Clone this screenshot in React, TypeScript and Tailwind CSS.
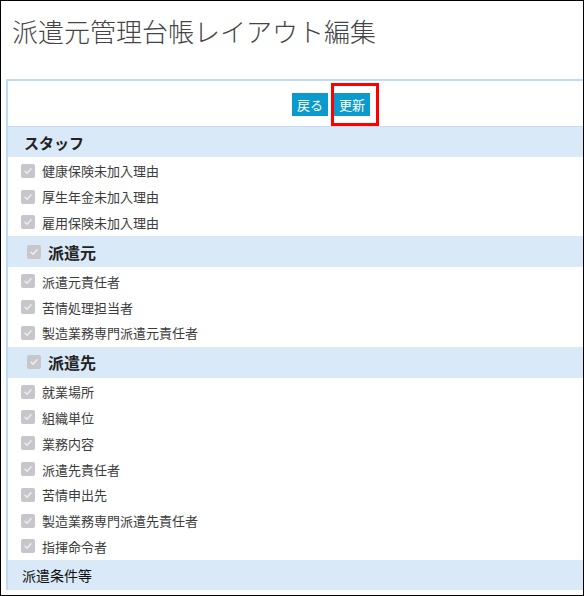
import React from "react";

const font = { fontFamily: '"Noto Sans CJK JP", "Noto Sans", sans-serif' };

function Check({ className = "" }: { className?: string }) {
  return (
    <span className={`inline-flex items-center justify-center w-[14px] h-[14px] rounded-[2px] bg-[#c6c6cb] shrink-0 ${className}`}>
      <svg width="10" height="10" viewBox="0 0 10 10">
        <path d="M2 5.2 L4.1 7.3 L8 2.8" fill="none" stroke="#f0f0f3" strokeWidth="1.4" strokeLinecap="round" strokeLinejoin="round" />
      </svg>
    </span>
  );
}

function Item({ label }: { label: string }) {
  return (
    <div className="h-[25.8px] flex items-center pl-[13px]">
      <Check />
      <span className="ml-[7px] text-[13px] text-[#3c3c3c] leading-none">{label}</span>
    </div>
  );
}

function TopHeader({ label, bold = true }: { label: string; bold?: boolean }) {
  return (
    <div className={`h-[30px] bg-[#dae9f8] flex items-center ${bold ? "pl-[16px]" : "pl-[14px]"}`}>
      <span className={`${bold ? "text-[15px] font-bold text-[#222]" : "text-[14px] font-normal text-[#111]"} leading-none`}>{label}</span>
    </div>
  );
}

function SubHeader({ label }: { label: string }) {
  return (
    <div className="h-[31px] bg-[#dae9f8] flex items-center pl-[19px]">
      <Check />
      <span className="ml-[7px] text-[16px] font-bold text-[#222] leading-none">{label}</span>
    </div>
  );
}

function Group({ items }: { items: string[] }) {
  return (
    <div className="py-px">
      {items.map((i) => (
        <Item key={i} label={i} />
      ))}
    </div>
  );
}

export default function App() {
  return (
    <div className="relative w-[584px] h-[596px] border border-black bg-white overflow-hidden" style={font}>
      <div className="h-[78px] pl-[11px] pt-[11px]">
        <h1 className="text-[26px] font-light text-[#444] leading-[38px] whitespace-nowrap">派遣元管理台帳レイアウト編集</h1>
      </div>
      <div className="ml-[5px] border-l-2 border-t-2 border-[#bfdcf5] w-[640px]">
        <div className="h-[46px] border-b border-[#c4ddf3] flex items-start pt-[12px] pl-[284px] gap-[6px]">
          <button className="h-[23px] px-[5px] bg-[#0b9acd] text-white text-[13px] leading-none">戻る</button>
          <button className="h-[23px] px-[5px] bg-[#0b9acd] text-white text-[13px] leading-none">更新</button>
        </div>
        <TopHeader label="スタッフ" />
        <Group items={["健康保険未加入理由", "厚生年金未加入理由", "雇用保険未加入理由"]} />
        <SubHeader label="派遣元" />
        <Group items={["派遣元責任者", "苦情処理担当者", "製造業務専門派遣元責任者"]} />
        <SubHeader label="派遣先" />
        <Group
          items={["就業場所", "組織単位", "業務内容", "派遣先責任者", "苦情申出先", "製造業務専門派遣先責任者", "指揮命令者"]}
        />
        <TopHeader label="派遣条件等" bold={false} />
      </div>
      <div className="absolute left-[330px] top-[82px] w-[48px] h-[43px] border-[3px] border-[#ff0000]" />
    </div>
  );
}
